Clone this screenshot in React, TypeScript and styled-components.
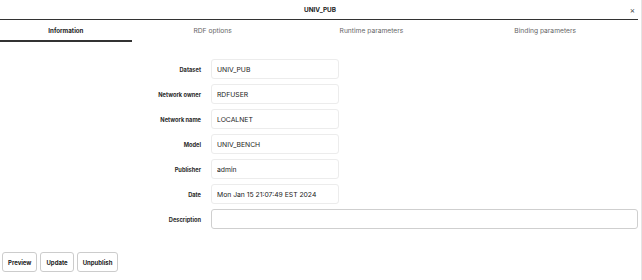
import styled, { createGlobalStyle } from "styled-components";

const GlobalStyle = createGlobalStyle`
  html, body {
    margin: 0;
    padding: 0;
    background: #ffffff;
  }
  body {
    font-family: Inter, "Liberation Sans", Arial, sans-serif;
    color: #222222;
  }
`;

const tabs = [
  { label: "Information", width: 132 },
  { label: "RDF options", width: 162 },
  { label: "Runtime parameters", width: 156 },
  { label: "Binding parameters", width: 192 },
];

const fields = [
  { label: "Dataset", value: "UNIV_PUB" },
  { label: "Network owner", value: "RDFUSER" },
  { label: "Network name", value: "LOCALNET" },
  { label: "Model", value: "UNIV_BENCH" },
  { label: "Publisher", value: "admin" },
  { label: "Date", value: "Mon Jan 15 21:07:49 EST 2024" },
];

function App() {
  return (
    <>
      <GlobalStyle />
      <Dialog>
        <Header>
          <span />
          <Title>UNIV_PUB</Title>
          <CloseButton aria-label="Close">×</CloseButton>
        </Header>
        <TabBar>
          {tabs.map((t, i) => (
            <Tab key={t.label} $active={i === 0} $width={t.width}>
              {t.label}
            </Tab>
          ))}
        </TabBar>
        <Form>
          {fields.map((f) => (
            <Row key={f.label}>
              <Label>{f.label}</Label>
              <Input defaultValue={f.value} readOnly />
            </Row>
          ))}
          <Row>
            <Label>Description</Label>
            <Input $wide defaultValue="" />
          </Row>
        </Form>
        <Actions>
          <ActionButton>Preview</ActionButton>
          <ActionButton>Update</ActionButton>
          <ActionButton>Unpublish</ActionButton>
        </Actions>
      </Dialog>
    </>
  );
}

export default App;

const Dialog = styled.div`
  width: 642px;
  height: 280px;
  box-sizing: border-box;
  border-right: 1px solid #e4e4e4;
  display: flex;
  flex-direction: column;
`;

const Header = styled.div`
  width: 638px;
  height: 20px;
  box-sizing: border-box;
  border-bottom: 1.5px solid #333333;
  display: grid;
  grid-template-columns: 1fr auto 1fr;
  align-items: center;
`;

const Title = styled.div`
  font-size: 6.4px;
  font-weight: 700;
  color: #222222;
  padding-left: 2px;
`;

const CloseButton = styled.button`
  justify-self: end;
  border: none;
  background: none;
  padding: 0;
  margin-right: 3px;
  font-family: inherit;
  font-size: 8px;
  line-height: 1;
  color: #444444;
`;

const TabBar = styled.div`
  display: flex;
  height: 22px;
`;

const Tab = styled.div<{ $active?: boolean; $width: number }>`
  width: ${(p) => p.$width}px;
  box-sizing: border-box;
  display: flex;
  align-items: center;
  justify-content: center;
  padding-top: 1px;
  font-size: ${(p) => (p.$active ? "6.2px" : "6.7px")};
  font-weight: ${(p) => (p.$active ? 700 : 400)};
  color: ${(p) => (p.$active ? "#222222" : "#666666")};
  border-bottom: 2px solid ${(p) => (p.$active ? "#333333" : "transparent")};
`;

const Form = styled.div`
  display: flex;
  flex-direction: column;
  gap: 5px;
  padding-top: 17px;
`;

const Row = styled.div`
  display: grid;
  grid-template-columns: 201px auto;
  column-gap: 10px;
  align-items: center;
  height: 20px;
`;

const Label = styled.label`
  text-align: right;
  font-size: 5.7px;
  font-weight: 700;
  color: #2a2a2a;
`;

const Input = styled.input<{ $wide?: boolean }>`
  width: ${(p) => (p.$wide ? "427px" : "128px")};
  height: 20px;
  box-sizing: border-box;
  border: 1px solid ${(p) => (p.$wide ? "#cfcfcf" : "#ececec")};
  border-radius: 3px;
  padding: 0 5px;
  font-family: inherit;
  font-size: 6.8px;
  color: #222222;
  background: #ffffff;
  outline: none;
`;

const Actions = styled.div`
  display: flex;
  gap: 3px;
  padding: 23px 0 0 2px;
`;

const ActionButton = styled.button`
  height: 20px;
  box-sizing: border-box;
  padding: 0 5px;
  border: 1px solid #cccccc;
  border-radius: 3px;
  background: #ffffff;
  font-family: inherit;
  font-size: 6px;
  font-weight: 700;
  color: #222222;
`;
